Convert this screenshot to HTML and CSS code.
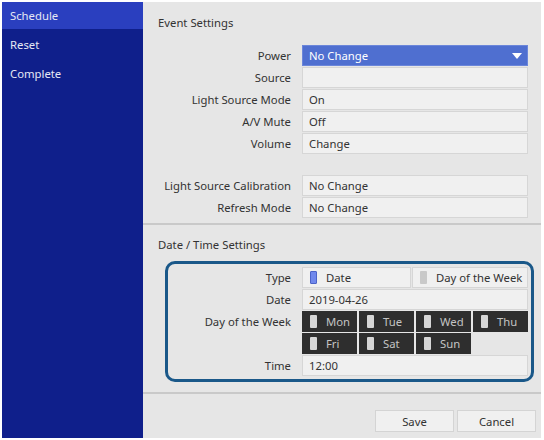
FILE: index.html
```html
<!DOCTYPE html>
<html lang="en">

<head>
    <meta charset="UTF-8">
    <meta name="viewport" content="width=device-width, initial-scale=1.0">
    <title>Schedule</title>
    <link rel="stylesheet" href="styles.css">
</head>

<body>
    <div class="app">
        <!--menu-->
        <div class="sidebar">
            <div class="menu-item active">Schedule</div>
            <div class="menu-item">Reset</div>
            <div class="menu-item">Complete</div>
        </div>
        <!--settings-->
        <div class="main">
            <div class="section event">
                <div class="section-title">Event Settings</div>
                <div class="form">
                    <div class="label">Power</div>
                    <div class="field select">No Change<span class="arrow"></span></div>
                    <div class="label">Source</div>
                    <div class="field"></div>
                    <div class="label">Light Source Mode</div>
                    <div class="field">On</div>
                    <div class="label">A/V Mute</div>
                    <div class="field">Off</div>
                    <div class="label">Volume</div>
                    <div class="field">Change</div>
                </div>
                <div class="form second">
                    <div class="label">Light Source Calibration</div>
                    <div class="field">No Change</div>
                    <div class="label">Refresh Mode</div>
                    <div class="field">No Change</div>
                </div>
            </div>
            <div class="section datetime">
                <div class="section-title">Date / Time Settings</div>
                <div class="focus-box">
                    <div class="form inner">
                        <div class="label">Type</div>
                        <div class="type-row">
                            <div class="field option"><span class="tick on"></span>Date</div>
                            <div class="field option"><span class="tick"></span>Day of the Week</div>
                        </div>
                        <div class="label">Date</div>
                        <div class="field">2019-04-26</div>
                        <div class="label tall">Day of the Week</div>
                        <div class="days">
                            <div class="day"><span class="tick"></span>Mon</div>
                            <div class="day"><span class="tick"></span>Tue</div>
                            <div class="day"><span class="tick"></span>Wed</div>
                            <div class="day"><span class="tick"></span>Thu</div>
                            <div class="day"><span class="tick"></span>Fri</div>
                            <div class="day"><span class="tick"></span>Sat</div>
                            <div class="day"><span class="tick"></span>Sun</div>
                        </div>
                        <div class="label">Time</div>
                        <div class="field">12:00</div>
                    </div>
                </div>
            </div>
            <div class="buttons">
                <button class="btn">Save</button>
                <button class="btn">Cancel</button>
            </div>
        </div>
    </div>
</body>

</html>
```

FILE: styles.css
```css
body {
    margin: 0;
    background: #ffffff;
    font-family: "Noto Sans", "Open Sans", sans-serif;
    font-size: 11.3px;
    color: #333333;
}

.app {
    display: flex;
    margin: 2px 3px 2px 2px;
    height: 436px;
}

.sidebar {
    width: 141px;
    background: #0f1f8b;
    flex-shrink: 0;
}

.menu-item {
    height: 27px;
    line-height: 27px;
    padding-left: 8px;
    margin-bottom: 2px;
    color: #e6e8f4;
}

.menu-item.active {
    background: #2a3fbf;
}

.main {
    flex: 1;
    background: #e6e6e6;
    display: flex;
    flex-direction: column;
}

.section-title {
    height: 18px;
    line-height: 18px;
    padding-left: 15px;
    color: #333333;
}

.event {
    padding-top: 12px;
    padding-bottom: 5px;
    border-bottom: 2px solid #c9c9c9;
}

.event .section-title {
    margin-bottom: 13px;
}

.form {
    display: grid;
    grid-template-columns: 133px 226px;
    column-gap: 11px;
    row-gap: 1px;
    padding-left: 15px;
    grid-auto-rows: 21px;
}

.form.second {
    margin-top: 21px;
}

.label {
    text-align: right;
    line-height: 21px;
    white-space: nowrap;
}

.label.tall {
    grid-row: span 2;
}

.field {
    box-sizing: border-box;
    height: 21px;
    line-height: 19px;
    background: #f0f0f0;
    border: 1px solid #d6d6d6;
    padding-left: 6px;
    white-space: nowrap;
}

.field.select {
    position: relative;
    background: #4f6fd0;
    border-color: #6b86da;
    color: #ffffff;
}

/* dropdown triangle */
.arrow {
    position: absolute;
    right: 5px;
    top: 7px;
    width: 0;
    height: 0;
    border-left: 5px solid transparent;
    border-right: 5px solid transparent;
    border-top: 6px solid #ffffff;
}

.datetime {
    padding-top: 11px;
    padding-bottom: 10px;
    border-bottom: 2px solid #c9c9c9;
}

.datetime .section-title {
    margin-bottom: 7px;
}

.focus-box {
    margin-left: 22px;
    margin-right: 7px;
    border: 3px solid #1a5889;
    border-radius: 10px;
    padding: 3px 0;
}

.form.inner {
    grid-template-columns: 123px 226px;
    padding-left: 0;
}

.type-row {
    display: grid;
    grid-template-columns: 109px 1fr;
    column-gap: 1px;
}

.option {
    display: flex;
    align-items: center;
}

.tick {
    display: inline-block;
    box-sizing: border-box;
    width: 7px;
    height: 13px;
    border-radius: 1px;
    background: #c9c9c9;
    margin-right: 9px;
    margin-left: 1px;
    flex-shrink: 0;
}

.tick.on {
    background: #7088ec;
    border: 1px solid #4c63c8;
}

.days {
    grid-row: span 2;
    display: grid;
    grid-template-columns: repeat(4, 1fr);
    column-gap: 2px;
    row-gap: 1px;
    grid-auto-rows: 21px;
}

.day {
    background: #2e2e2e;
    color: #c4c4c4;
    display: flex;
    align-items: center;
    padding-left: 8px;
}

.day .tick {
    background: #d6d6d6;
    margin-left: 0;
}

.buttons {
    display: flex;
    justify-content: flex-end;
    gap: 3px;
    padding: 16px 5px 0 0;
}

.btn {
    width: 79px;
    height: 22px;
    background: #f0f0f0;
    border: 1px solid #d4d4d4;
    font-family: inherit;
    font-size: 11.3px;
    color: #333333;
    padding: 0;
}
```
